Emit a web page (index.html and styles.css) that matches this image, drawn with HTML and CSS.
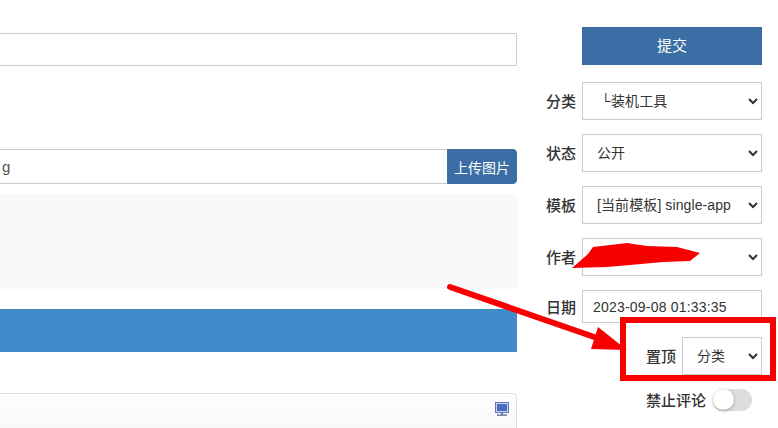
FILE: index.html
```html
<!DOCTYPE html>
<html lang="zh">
<head>
<meta charset="utf-8">
<title>编辑文章</title>
<link rel="stylesheet" href="styles.css">
</head>
<body>
<div class="page">
  <main class="editor-col">
    <input class="field title-field" type="text" aria-label="标题">
    <div class="upload-group">
      <input class="field upload-field" type="text" value="g" aria-label="图片">
      <button class="btn upload-btn" type="button">上传图片</button>
    </div>
    <div class="grey-block"></div>
    <div class="blue-bar"></div>
    <div class="editor-box">
      <svg class="monitor" viewBox="0 0 14 14" width="14" height="14" aria-hidden="true">
        <rect x="0.5" y="0.5" width="13" height="10" fill="#c9d6ee" stroke="#5b79b8"/>
        <rect x="2" y="2" width="10" height="7" fill="#4a6cc0"/>
        <rect x="6" y="11" width="2" height="1.5" fill="#5b79b8"/>
        <rect x="2" y="12.5" width="10" height="1.2" fill="#44598f"/>
      </svg>
    </div>
  </main>
  <aside class="side-col">
    <button class="btn submit-btn" type="button">提交</button>
    <label class="row"><span class="row-label">分类</span>
      <select class="control"><option>&nbsp;└装机工具</option></select></label>
    <label class="row"><span class="row-label">状态</span>
      <select class="control"><option>公开</option></select></label>
    <label class="row"><span class="row-label">模板</span>
      <select class="control"><option>[当前模板] single-app</option></select></label>
    <label class="row"><span class="row-label">作者</span>
      <select class="control"><option>&nbsp;</option></select></label>
    <label class="row"><span class="row-label">日期</span>
      <input class="control date-input" type="text" value="2023-09-08 01:33:35"></label>
    <label class="row"><span class="row-label">置顶</span>
      <select class="control control-short"><option>分类</option></select></label>
    <div class="row toggle-row"><span class="row-label">禁止评论</span>
      <span class="toggle"><span class="knob"></span></span></div>
  </aside>
</div>
<svg class="annotation" viewBox="0 0 778 428" width="778" height="428" aria-hidden="true">
  <path d="M572 268 L588 254 L593 247 L627 243 L647 246 L677 247 L700 253 L690 261 L663 262 L630 265 L607 267 Z" fill="#f80000"/>
  <path d="M450 287 L600 339" stroke="#f80000" stroke-width="6" stroke-linecap="round" fill="none"/>
  <path d="M598 327 L627 350 L591 349 Z" fill="#f80000"/>
  <rect x="623" y="320" width="150" height="58" fill="none" stroke="#f80000" stroke-width="6"/>
</svg>
</body>
</html>
```
FILE: styles.css
```css
html, body {
  margin: 0;
  padding: 0;
  background: #fff;
  overflow: hidden;
  height: 428px;
}
body {
  font-family: "Liberation Sans", "Noto Sans CJK SC", sans-serif;
  font-size: 14px;
  color: #333;
  position: relative;
}
.page {
  display: flex;
  align-items: flex-start;
  width: 778px;
  height: 428px;
  overflow: hidden;
}
.editor-col {
  flex: none;
  width: 527px;
  margin-left: -10px;
  padding-top: 33px;
  display: flex;
  flex-direction: column;
}
.field {
  box-sizing: border-box;
  border: 1px solid #ccc;
  background: #fff;
  font: inherit;
  color: #555;
  outline: none;
}
.title-field {
  width: 100%;
  height: 33px;
}
.upload-group {
  display: flex;
  margin-top: 83px;
  height: 35px;
}
.upload-field {
  flex: 1;
  min-width: 0;
  height: 35px;
  border-right: 0;
  padding: 0 0 0 11px;
  font-size: 15px;
}
.btn {
  border: 1px solid #3a6ea5;
  background: #3a6ea5;
  color: #fff;
  font: inherit;
  padding: 0;
}
.upload-btn {
  flex: none;
  width: 70px;
  height: 35px;
  border-radius: 0 4px 4px 0;
}
.grey-block {
  height: 95px;
  margin-top: 10px;
  background: #f9f9f9;
}
.blue-bar {
  height: 43px;
  margin-top: 20px;
  background: #428bca;
}
.editor-box {
  box-sizing: border-box;
  height: 60px;
  margin-top: 41px;
  padding: 8px 7px 0 0;
  border: 1px solid #ddd;
  border-radius: 4px;
  background: linear-gradient(#fff, #f3f3f3);
  display: flex;
  justify-content: flex-end;
  align-items: flex-start;
}
.monitor {
  display: block;
}
.side-col {
  flex: none;
  width: 245px;
  padding: 27px 16px 0 0;
  box-sizing: content-box;
  display: flex;
  flex-direction: column;
  align-items: flex-end;
  gap: 14px;
}
.submit-btn {
  width: 180px;
  height: 38px;
  margin-bottom: 3px;
  padding-bottom: 3px;
  font-size: 15px;
}
.row {
  display: flex;
  justify-content: flex-end;
  align-items: center;
  gap: 6px;
}
.row-label {
  font-size: 15px;
  font-weight: 500;
  line-height: 20px;
  padding-top: 2px;
  color: #333;
  white-space: nowrap;
}
.control {
  box-sizing: border-box;
  width: 180px;
  height: 38px;
  padding: 0 6px 0 10px;
  border: 1px solid #ccc;
  border-radius: 0;
  background: #fff;
  font: inherit;
  letter-spacing: 0.1px;
  color: #333;
}
.date-input {
  height: 33px;
  outline: none;
  letter-spacing: 0.2px;
}
.control-short {
  width: 80px;
}
.toggle-row {
  padding-right: 10px;
  gap: 7px;
}
.toggle {
  width: 39px;
  height: 22px;
  border-radius: 11px;
  background: #ddd;
  display: block;
}
.knob {
  display: block;
  width: 21px;
  height: 21px;
  border-radius: 50%;
  background: #fff;
  box-shadow: 0 1px 3px rgba(0, 0, 0, 0.35);
}
.annotation {
  position: absolute;
  left: 0;
  top: 0;
  pointer-events: none;
}
```
